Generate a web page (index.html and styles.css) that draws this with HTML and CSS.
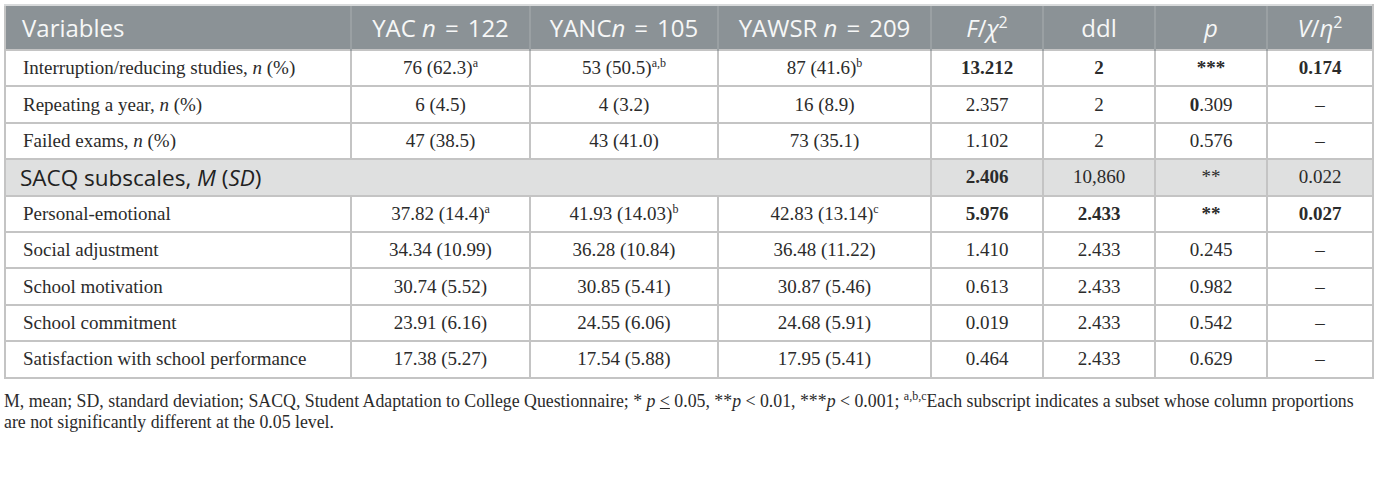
FILE: index.html
```html
<!DOCTYPE html>
<html lang="en">
<head>
    <meta charset="UTF-8">
    <meta name="viewport" content="width=device-width, initial-scale=1.0">
    <title>Study outcomes and SACQ subscales</title>
    <link rel="stylesheet" href="styles.css">
</head>
<body>
    <div class="container">
        <table class="results">
            <colgroup>
                <col class="c-var">
                <col class="c-yac">
                <col class="c-yanc">
                <col class="c-yawsr">
                <col class="c-stat">
                <col class="c-stat">
                <col class="c-stat">
                <col class="c-eff">
            </colgroup>
            <thead>
                <tr>
                    <th class="first">Variables</th>
                    <th>YAC <i>n</i><span class="eq">=</span>122</th>
                    <th>YANC<i>n</i><span class="eq">=</span>105</th>
                    <th>YAWSR <i>n</i><span class="eq">=</span>209</th>
                    <th><i>F</i>/<i>χ</i><sup>2</sup></th>
                    <th>ddl</th>
                    <th><i>p</i></th>
                    <th><i>V</i>/<i>η</i><sup>2</sup></th>
                </tr>
            </thead>
            <tbody>
                <tr>
                    <td class="first">Interruption/reducing studies, <i>n</i> (%)</td>
                    <td>76 (62.3)<sup>a</sup></td>
                    <td>53 (50.5)<sup>a,b</sup></td>
                    <td>87 (41.6)<sup>b</sup></td>
                    <td><b>13.212</b></td>
                    <td><b>2</b></td>
                    <td><b>***</b></td>
                    <td><b>0.174</b></td>
                </tr>
                <tr>
                    <td class="first">Repeating a year, <i>n</i> (%)</td>
                    <td>6 (4.5)</td>
                    <td>4 (3.2)</td>
                    <td>16 (8.9)</td>
                    <td>2.357</td>
                    <td>2</td>
                    <td><b>0</b>.309</td>
                    <td>–</td>
                </tr>
                <tr>
                    <td class="first">Failed exams, <i>n</i> (%)</td>
                    <td>47 (38.5)</td>
                    <td>43 (41.0)</td>
                    <td>73 (35.1)</td>
                    <td>1.102</td>
                    <td>2</td>
                    <td>0.576</td>
                    <td>–</td>
                </tr>
                <tr class="group">
                    <td class="first" colspan="4">SACQ subscales, <i>M</i> (<i>SD</i>)</td>
                    <td><b>2.406</b></td>
                    <td>10,860</td>
                    <td>**</td>
                    <td>0.022</td>
                </tr>
                <tr>
                    <td class="first">Personal-emotional</td>
                    <td>37.82 (14.4)<sup>a</sup></td>
                    <td>41.93 (14.03)<sup>b</sup></td>
                    <td>42.83 (13.14)<sup>c</sup></td>
                    <td><b>5.976</b></td>
                    <td><b>2.433</b></td>
                    <td><b>**</b></td>
                    <td><b>0.027</b></td>
                </tr>
                <tr>
                    <td class="first">Social adjustment</td>
                    <td>34.34 (10.99)</td>
                    <td>36.28 (10.84)</td>
                    <td>36.48 (11.22)</td>
                    <td>1.410</td>
                    <td>2.433</td>
                    <td>0.245</td>
                    <td>–</td>
                </tr>
                <tr>
                    <td class="first">School motivation</td>
                    <td>30.74 (5.52)</td>
                    <td>30.85 (5.41)</td>
                    <td>30.87 (5.46)</td>
                    <td>0.613</td>
                    <td>2.433</td>
                    <td>0.982</td>
                    <td>–</td>
                </tr>
                <tr>
                    <td class="first">School commitment</td>
                    <td>23.91 (6.16)</td>
                    <td>24.55 (6.06)</td>
                    <td>24.68 (5.91)</td>
                    <td>0.019</td>
                    <td>2.433</td>
                    <td>0.542</td>
                    <td>–</td>
                </tr>
                <tr>
                    <td class="first">Satisfaction with school performance</td>
                    <td>17.38 (5.27)</td>
                    <td>17.54 (5.88)</td>
                    <td>17.95 (5.41)</td>
                    <td>0.464</td>
                    <td>2.433</td>
                    <td>0.629</td>
                    <td>–</td>
                </tr>
            </tbody>
        </table>

        <p class="note">M, mean; SD, standard deviation; SACQ, Student Adaptation to College Questionnaire; * <i>p</i> <span class="le">&lt;</span> 0.05, **<i>p</i> &lt; 0.01, ***<i>p</i> &lt; 0.001; <sup>a,b,c</sup>Each subscript indicates a subset whose column proportions are not significantly different at the 0.05 level.</p>
    </div>
</body>
</html>
```

FILE: styles.css
```css
body {
    margin: 0;
    padding: 4px;
    background: #ffffff;
    font-family: "Liberation Serif", "Times New Roman", serif;
    color: #2b2b2b;
}

.container {
    width: 1368px;
}

.results {
    width: 1368px;
    border-collapse: collapse;
    table-layout: fixed;
    font-size: 19px;
}

.c-var { width: 346px; }
.c-yac { width: 179px; }
.c-yanc { width: 188px; }
.c-yawsr { width: 213px; }
.c-stat { width: 112px; }
.c-eff { width: 106px; }

.results th {
    height: 43px;
    padding: 0 4px;
    background: #8b9296;
    color: #f6f7f7;
    font-family: "Open Sans", "Noto Sans", sans-serif;
    font-weight: normal;
    font-size: 24px;
    text-align: center;
    border-left: 2px solid #9aa0a3;
    border-top: 2px solid #d8dadb;
    white-space: nowrap;
}

.results th:first-child {
    border-left: 2px solid #c4c4c4;
}

.results th:last-child {
    border-right: 2px solid #c4c4c4;
}

.results th sup {
    font-size: 16px;
    line-height: 0;
}

.eq {
    padding: 0 9px;
}

.results td {
    height: 34.4px;
    padding: 0 4px;
    text-align: center;
    border: 2px solid #c4c4c4;
    white-space: nowrap;
}

.results .first {
    text-align: left;
    padding-left: 17px;
}

.results th.first {
    padding-left: 16px;
}

.results td sup {
    font-size: 12px;
    line-height: 0;
}

.group td {
    background: #dfe0e0;
}

.group td.first {
    font-family: "Open Sans", "Noto Sans", sans-serif;
    font-size: 22.5px;
    color: #222;
    padding-left: 14px;
}

.note {
    margin: 12px 0 0;
    font-size: 17.8px;
    line-height: 21px;
    color: #2b2b2b;
}

.note sup {
    font-size: 12px;
    line-height: 0;
}

.le {
    text-decoration: underline;
}
```
